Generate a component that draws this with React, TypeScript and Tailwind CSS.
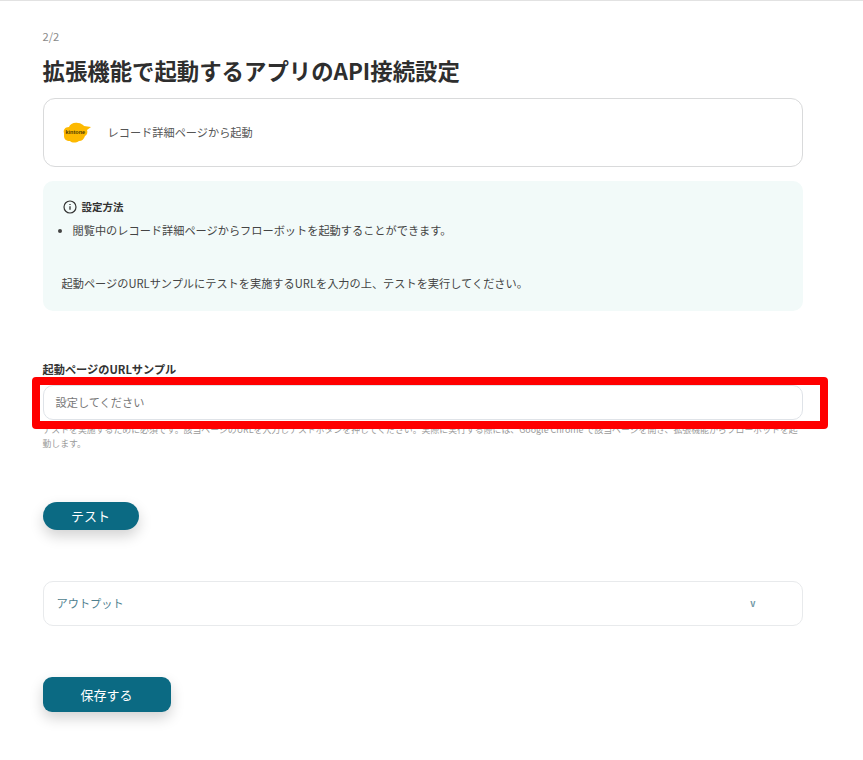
const font = '[font-family:"Noto_Sans_CJK_JP","Noto_Sans",sans-serif]'

function KintoneLogo() {
  return (
    <svg width="32" height="26" viewBox="0 0 32 26" className="shrink-0">
      <path
        d="M3 13c-1-3 1-6 5-6 1-3 5-5 9-4 3 0 5 2 6 3l7 1-4 3c1 2 0 5-2 6-1 3-3 5-6 5-3 2-7 2-9 0-4 0-6-2-6-5z"
        fill="#fdb900"
      />
      <text x="4.5" y="13.5" fontSize="5.5" fontWeight="700" fill="#4a3a00" fontFamily="Liberation Sans, sans-serif">
        kintone
      </text>
    </svg>
  )
}

function InfoIcon() {
  return (
    <svg width="14" height="14" viewBox="0 0 14 14" fill="none" className="shrink-0">
      <circle cx="7" cy="7" r="6" stroke="#333" strokeWidth="1.2" />
      <path d="M7 6.2v3.6M7 4v1.1" stroke="#333" strokeWidth="1.3" />
    </svg>
  )
}

export default function App() {
  return (
    <div className={`relative w-[863px] h-[760px] bg-white overflow-hidden border-t border-[#e2e2e2] ${font}`}>
      <div className="flex flex-col w-[760px] ml-[42.5px] pt-[28px]">
        <p className="text-[11.2px] leading-[14px] text-[#8a8a8a]">2/2</p>

        <h1 className="mt-[12px] text-[22.4px] leading-[30px] font-bold text-[#2e2e2e]">
          拡張機能で起動するアプリのAPI接続設定
        </h1>

        {/* Launch source */}
        <div className="mt-[13px] h-[69px] flex items-center gap-[15px] pl-[17px] rounded-[12px] border border-[#d9dadb] bg-white">
          <KintoneLogo />
          <span className="text-[11.2px] text-[#555]">レコード詳細ページから起動</span>
        </div>

        {/* How to set up */}
        <div className="mt-[14px] h-[130px] rounded-[10px] bg-[#f2faf9] pl-[19px] pt-[19px] text-[11.2px] text-[#444]">
          <div className="flex items-center gap-[5px] h-[14px] pl-[1px]">
            <InfoIcon />
            <span className="font-bold text-[10.5px] text-[#333]">設定方法</span>
          </div>
          <ul className="mt-[7px] pl-[11px] list-disc leading-[18px]">
            <li>閲覧中のレコード詳細ページからフローボットを起動することができます。</li>
          </ul>
          <p className="mt-[35px] leading-[18px]">
            起動ページのURLサンプルにテストを実施するURLを入力の上、テストを実行してください。
          </p>
        </div>

        {/* URL sample field */}
        <label className="mt-[50px] text-[11.2px] leading-[16px] font-bold text-[#333]">起動ページのURLサンプル</label>
        <div className="mt-[8px] h-[35px] flex items-center pl-[12px] rounded-[10px] border border-[#dfe3e8] bg-white">
          <span className="text-[11.2px] text-[#777]">設定してください</span>
        </div>
        <p className="mt-[3px] text-[8.9px] leading-[14px] text-[#9a9a9a]">
          テストを実施するために必須です。該当ページのURLを入力しテストボタンを押してください。実際に実行する際には、Google Chrome で該当ページを開き、拡張機能からフローボットを起動します。
        </p>

        <button className="mt-[51px] w-[96px] h-[28px] rounded-full bg-[#0b6a83] text-white text-[13px] shadow-[0_6px_14px_rgba(0,0,0,0.18)]">
          テスト
        </button>

        {/* Output accordion */}
        <div className="mt-[51px] h-[45px] flex items-center justify-between pl-[13px] pr-[46px] rounded-[10px] border border-[#e8eaec] bg-white">
          <span className="text-[11.2px] text-[#4f7f8f]">アウトプット</span>
          <span className="text-[9px] font-bold text-[#6f97a5]">v</span>
        </div>

        <button className="mt-[51px] w-[128px] h-[35px] rounded-[9px] bg-[#0b6a83] text-white text-[13px] shadow-[0_6px_14px_rgba(0,0,0,0.18)]">
          保存する
        </button>
      </div>

      {/* Red highlight drawn over the screenshot */}
      <div className="absolute left-[32px] top-[376px] w-[796px] h-[52px] border-8 border-[#ff0000] rounded-[4px]" />
    </div>
  )
}
